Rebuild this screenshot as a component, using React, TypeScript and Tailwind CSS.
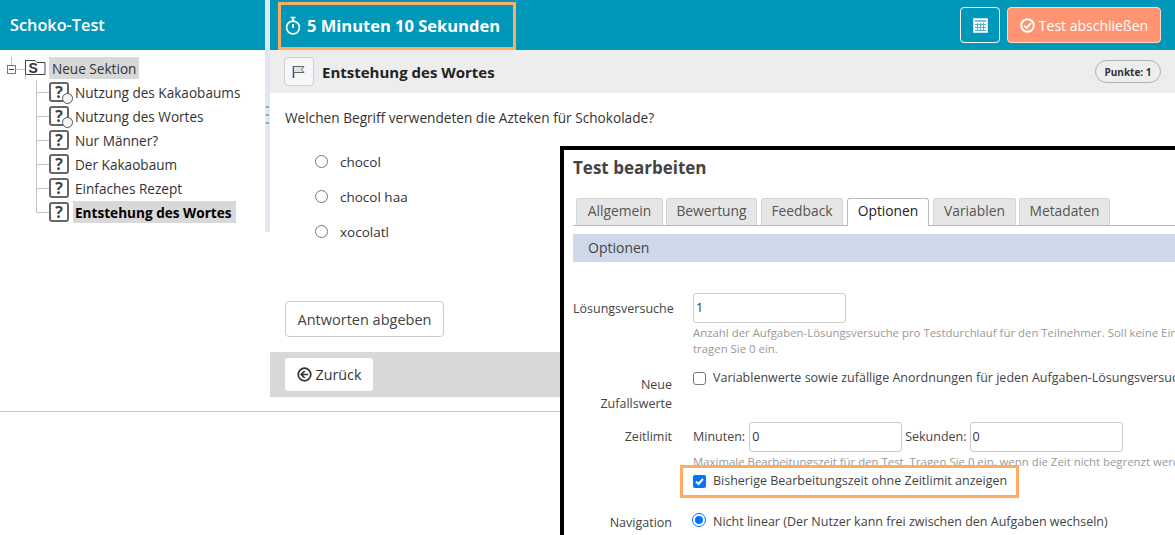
const answers = ["chocol", "chocol haa", "xocolatl"]

const treeItems = [
  { label: "Nutzung des Kakaobaums", open: true },
  { label: "Nutzung des Wortes", open: true },
  { label: "Nur Männer?" },
  { label: "Der Kakaobaum" },
  { label: "Einfaches Rezept" },
  { label: "Entstehung des Wortes", active: true },
]

const tabs = [
  { label: "Allgemein", size: "w-[87px]" },
  { label: "Bewertung", size: "ml-[3px] w-[91px]" },
  { label: "Feedback", size: "ml-[4px] w-[82px]" },
  { label: "Optionen", size: "ml-[4px] w-[82px]", active: true },
  { label: "Variablen", size: "ml-[4px] w-[83px]" },
  { label: "Metadaten", size: "ml-[3px] w-[91px]" },
]

function QuestionIcon({ open }: { open?: boolean }) {
  return (
    <span className="relative flex h-[20px] w-[20px] shrink-0 items-center justify-center rounded-[3px] border-2 border-[#666] bg-white text-[16px] font-bold text-[#444]">
      ?
      {open && (
        <span className="absolute -right-[6px] -bottom-[4px] h-[11px] w-[11px] rounded-full border border-[#555] bg-[#f4f4f4]" />
      )}
    </span>
  )
}

function TreeRow({ label, open, active, last }: { label: string; open?: boolean; active?: boolean; last?: boolean }) {
  return (
    <div className="flex h-6 items-center pl-[36px]">
      <svg width="13" height="24" className="shrink-0" stroke="#c4c4c4" fill="none">
        <path d={last ? "M.5 0V12.5H13" : "M.5 0V24M.5 12.5H13"} />
      </svg>
      <QuestionIcon open={open} />
      <span
        className={
          active
            ? "ml-[4px] flex h-[22px] w-[163px] items-center bg-[#d8d8d8] pt-[2px] pl-[2px] font-bold text-black"
            : "ml-[6px] pt-[2px] text-[#333]"
        }
      >
        {label}
      </span>
    </div>
  )
}

function Sidebar() {
  return (
    <aside className="w-[265px] shrink-0">
      <div className="flex h-[50px] items-center bg-[#0097b9] pl-[10px] text-[16.3px] font-semibold text-white">Schoko-Test</div>
      <div className="pt-[7px] text-[13.6px]">
        <div className="mb-[1px] flex h-[22px] items-center pl-[7px]">
          <svg width="42" height="22" className="shrink-0" fill="none">
            <path d="M4.5 0V8M8 12.5H18M18.5 2V22" stroke="#c4c4c4" />
            <rect x=".5" y="8.5" width="8" height="8" fill="#fff" stroke="#777" />
            <path d="M2 12.5H7" stroke="#333" />
            <path d="M18.5 3.5H28L30 5.5H38V17.5H18.5Z" fill="#fff" stroke="#444" />
            <text x="21.5" y="15.5" fontSize="14" fontWeight="700" fill="#333" fontFamily="'Liberation Sans', sans-serif">
              S
            </text>
          </svg>
          <span className="flex h-[22px] w-[90px] items-center bg-[#d8d8d8] pt-[2px] pl-[3px] text-[#333]">Neue Sektion</span>
        </div>
        {treeItems.map((item, i) => (
          <TreeRow key={item.label} {...item} last={i === treeItems.length - 1} />
        ))}
      </div>
    </aside>
  )
}

function TopBar() {
  return (
    <header className="flex h-[50px] items-center justify-between bg-[#0097b9] pr-[14px] pl-[8px]">
      <div className="mt-[2px] flex h-[48px] w-[238px] items-center gap-[6px] border-[3px] border-[#fdac60] pl-[4px] text-[16.5px] font-bold text-white">
        <svg width="16" height="20" viewBox="0 0 16 20" fill="none" stroke="#fff" strokeWidth="1.7">
          <circle cx="8" cy="11.5" r="6.4" />
          <path d="M5.5 1.5H10.5M8 2V5M8 8V12" />
        </svg>
        5 Minuten 10 Sekunden
      </div>
      <div className="flex gap-[7px]">
        <button className="flex h-[36px] w-[40px] items-center justify-center rounded-[4px] border border-white">
          <svg width="15" height="15" viewBox="0 0 15 15">
            <rect width="15" height="15" fill="#bfe9f2" />
            <rect x="1" y="1" width="13" height="13" fill="#f4fcfe" />
            <rect x="2" y="2" width="11" height="2" fill="#7fc3d6" />
            <path d="M4.5 5V13M7.5 5V13M10.5 5V13M2 6.5H13M2 9.5H13M2 12.5H13" stroke="#5eaec8" />
          </svg>
        </button>
        <button className="flex h-[36px] w-[154px] items-center justify-center gap-[4px] rounded-[4px] border border-[#ffd9cc] bg-[#ff9473] text-[14px] text-white">
          <svg width="15" height="15" viewBox="0 0 15 15" fill="none" stroke="#fff" strokeWidth="1.9">
            <circle cx="7.5" cy="7.5" r="6.3" />
            <path d="M4.2 7.6L6.7 10L11 5" />
          </svg>
          Test abschließen
        </button>
      </div>
    </header>
  )
}

function Question() {
  return (
    <main className="min-w-0 flex-1">
      <TopBar />
      <div className="flex h-[43px] items-center justify-between bg-[#ededed] pr-[14px] pl-[14px]">
        <div className="flex items-center gap-[8px]">
          <span className="flex h-[29px] w-[30px] items-center justify-center rounded-[4px] border border-[#d0d0d0] bg-[#f6f7fa]">
            <svg width="14" height="14" viewBox="0 0 14 14" fill="none" stroke="#2f5a8f">
              <path d="M1.5 1V13" strokeWidth="1.6" />
              <path d="M2 1.5H12L9.5 4.5L12 7.5H2" fill="#e2e2e2" stroke="#666" />
            </svg>
          </span>
          <span className="pt-[2px] text-[15px] font-bold text-[#222]">Entstehung des Wortes</span>
        </div>
        <span className="flex h-[23px] w-[66px] items-center justify-center rounded-full border border-[#b0b0b0] pt-px text-[10px] font-bold text-[#333]">
          Punkte: 1
        </span>
      </div>
      <p className="pt-[15px] pl-[15px] text-[13.65px] leading-[20px] text-[#333]">Welchen Begriff verwendeten die Azteken für Schokolade?</p>
      <div className="flex flex-col gap-[15px] pt-[24px] pl-[45px]">
        {answers.map((answer) => (
          <label key={answer} className="flex h-[20px] items-center text-[13.5px] text-[#333]">
            <span className="mb-[2px] h-[13px] w-[13px] rounded-full border border-[#777] bg-white" />
            <span className="ml-[12px]">{answer}</span>
          </label>
        ))}
      </div>
      <div className="pt-[59px] pl-[15px]">
        <button className="h-[36px] w-[159px] rounded-[4px] border border-[#ccc] bg-white pt-px text-[14.5px] text-[#444]">Antworten abgeben</button>
      </div>
      <div className="mt-[15px] flex h-[45px] items-center bg-[#d8d8d8] pl-[15px]">
        <button className="flex h-[33px] w-[88px] items-center justify-center gap-[4px] rounded-[3px] bg-white text-[14.3px] text-[#333]">
          <svg width="15" height="15" viewBox="0 0 15 15" fill="none" stroke="#333" strokeWidth="1.7">
            <circle cx="7.5" cy="7.5" r="6.3" />
            <path d="M7.7 4L4.2 7.5L7.7 11M4.5 7.5H11.2" />
          </svg>
          Zurück
        </button>
      </div>
    </main>
  )
}

function EditDialog() {
  const inputClass = "h-[30px] rounded-[3px] border border-[#ccc] bg-white pl-[2px] flex items-center text-[#333]"

  return (
    <section className="absolute top-[146px] left-[560px] h-[389px] w-[615px] overflow-hidden border-t-4 border-l-4 border-black bg-white pl-[9px] text-[12.5px] whitespace-nowrap text-[#444]">
      <h2 className="pt-[6px] text-[17px] leading-[24px] font-bold text-[#444]">Test bearbeiten</h2>
      <div className="mt-[18px] flex h-[28px] items-end border-b border-[#bbb] pl-[3px] text-[13.8px]">
        {tabs.map((tab) => (
          <span
            key={tab.label}
            className={
              tab.active
                ? `-mb-px flex h-[28px] items-center justify-center rounded-t-[3px] border border-b-0 border-[#bbb] bg-white pb-[3px] text-[#222] ${tab.size}`
                : `flex h-[27px] items-center justify-center rounded-t-[3px] border border-b-0 border-[#d4d4d4] bg-[#e6e6e6] pb-[2px] text-[#555] ${tab.size}`
            }
          >
            {tab.label}
          </span>
        ))}
      </div>
      <div className="mt-[8px] flex h-[28px] items-center bg-[#cdd8e8] pb-[2px] pl-[15px] text-[14px] text-[#444]">Optionen</div>

      <div className="mt-[31px] flex">
        <div className="w-[100px] shrink-0 pt-[7px] text-left leading-[18px]">Lösungsversuche</div>
        <div className="ml-[20px]">
          <div className={`${inputClass} w-[153px]`}>1</div>
          <p className="mt-[2px] text-[11.4px] leading-[16px] text-[#999]">
            Anzahl der Aufgaben-Lösungsversuche pro Testdurchlauf für den Teilnehmer. Soll keine Einschränkung gelten,
            <br />
            tragen Sie 0 ein.
          </p>
        </div>
      </div>

      <div className="mt-[12px] flex">
        <div className="w-[100px] shrink-0 pt-[6px] pr-px text-right leading-[19px]">
          Neue
          <br />
          Zufallswerte
        </div>
        <label className="ml-[20px] flex h-[18px] items-center">
          <span className="h-[13px] w-[13px] rounded-[3px] border border-[#777] bg-white" />
          <span className="ml-[7px]">Variablenwerte sowie zufällige Anordnungen für jeden Aufgaben-Lösungsversuch neu erzeugen</span>
        </label>
      </div>

      <div className="mt-[9px] flex">
        <div className="w-[100px] shrink-0 pt-[6px] pr-px text-right leading-[18px]">Zeitlimit</div>
        <div className="ml-[20px] min-w-0">
          <div className="flex items-center">
            <span>Minuten:</span>
            <div className={`${inputClass} ml-[4px] w-[153px]`}>0</div>
            <span className="ml-[3px]">Sekunden:</span>
            <div className={`${inputClass} ml-[3px] w-[153px]`}>0</div>
          </div>
          <p className="mt-[2px] h-[11px] text-[11.4px] leading-[16px] text-[#999]">
            Maximale Bearbeitungszeit für den Test. Tragen Sie 0 ein, wenn die Zeit nicht begrenzt werden soll.
          </p>
        </div>
      </div>

      <div className="relative ml-[107px] flex h-[33px] w-[339px] items-center border-[3px] border-[#fdac60] bg-white pl-[10px]">
        <span className="flex h-[13px] w-[13px] items-center justify-center rounded-[2px] bg-[#0075ff]">
          <svg width="11" height="11" viewBox="0 0 11 11" fill="none" stroke="#fff" strokeWidth="2">
            <path d="M2 5.5L4.5 8L9 3" />
          </svg>
        </span>
        <span className="ml-[7px]">Bisherige Bearbeitungszeit ohne Zeitlimit anzeigen</span>
      </div>

      <div className="mt-[15px] flex">
        <div className="w-[100px] shrink-0 pt-px pr-px text-right leading-[18px]">Navigation</div>
        <label className="ml-[20px] flex h-[18px] items-center">
          <span className="mb-[4px] h-[12px] w-[12px] rounded-full border-[2px] border-white bg-[#0075ff] outline outline-[#0075ff]" />
          <span className="ml-[8px] pt-px">Nicht linear (Der Nutzer kann frei zwischen den Aufgaben wechseln)</span>
        </label>
      </div>
    </section>
  )
}

export default function App() {
  return (
    <div className="relative h-[535px] w-[1175px] overflow-hidden bg-white font-['Open_Sans',sans-serif]">
      <div className="flex h-[412px] border-b border-[#ccc]">
        <Sidebar />
        <div className="relative h-[232px] w-[5px] shrink-0 bg-[#e0e6f2]">
          <div className="absolute top-[106px] left-[1px] flex flex-col gap-[6px]">
            <span className="h-[2px] w-[3px] bg-[#8ea4c8]" />
            <span className="h-[2px] w-[3px] bg-[#8ea4c8]" />
            <span className="h-[2px] w-[3px] bg-[#8ea4c8]" />
          </div>
        </div>
        <Question />
      </div>
      <EditDialog />
    </div>
  )
}
